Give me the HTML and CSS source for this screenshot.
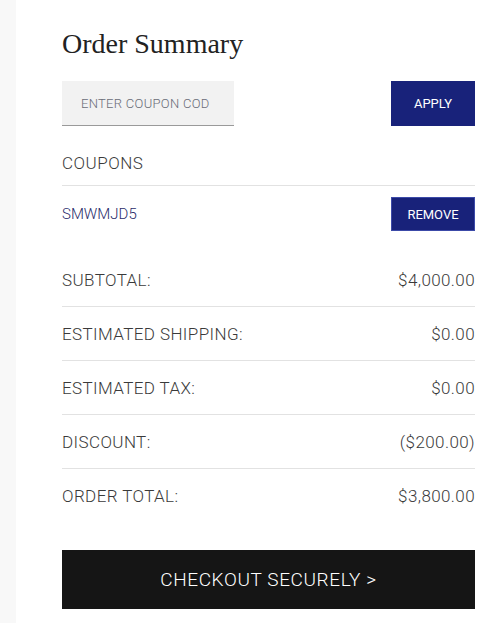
FILE: index.html
```html
<!DOCTYPE html>
<html>
<head>
<meta charset="utf-8">
<link rel="stylesheet" href="styles.css">
</head>
<body>
<div class="page">
  <div class="strip"></div>
  <main class="summary">
    <h1 class="title">Order Summary</h1>
    <div class="coupon-form">
      <div class="coupon-input">ENTER COUPON COD</div>
      <button class="btn btn-apply">APPLY</button>
    </div>
    <div class="coupons-label">COUPONS</div>
    <div class="coupon-row">
      <div class="coupon-line">
        <span class="coupon-code">SMWMJD5</span>
        <button class="btn btn-remove">REMOVE</button>
      </div>
    </div>
    <div class="totals">
      <div class="row"><span>SUBTOTAL:</span><span>$4,000.00</span></div>
      <div class="row"><span>ESTIMATED SHIPPING:</span><span>$0.00</span></div>
      <div class="row"><span>ESTIMATED TAX:</span><span>$0.00</span></div>
      <div class="row"><span>DISCOUNT:</span><span>($200.00)</span></div>
      <div class="row"><span>ORDER TOTAL:</span><span>$3,800.00</span></div>
    </div>
    <button class="btn btn-checkout">CHECKOUT SECURELY &gt;</button>
  </main>
</div>
</body>
</html>
```
FILE: styles.css
```css
html, body { margin: 0; padding: 0; background: #fff; }
body { font-family: Roboto, "Liberation Sans", sans-serif; color: #3a3a3a; }
.page { display: flex; min-height: 623px; }
.strip { width: 16px; background: #f8f8f8; flex: none; }
.summary { width: 413px; padding: 0 0 0 46px; }
.title {
  font-family: "Liberation Serif", serif; font-weight: 400;
  font-size: 28px; color: #222; margin: 28px 0 0 0; line-height: 32px;
}
.coupon-form { display: flex; justify-content: space-between; margin-top: 21px; }
.coupon-input {
  width: 172px; height: 45px; box-sizing: border-box;
  background: #f2f2f2; border-bottom: 1px solid #9a9a9a;
  font-size: 13px; font-weight: 300; color: #6a6d78; padding-left: 19px;
  letter-spacing: 0.3px;
  display: flex; align-items: center;
}
.btn { border: 0; font-family: Roboto, "Liberation Sans", sans-serif; color: #fff; cursor: pointer; padding: 0; }
.btn-apply { width: 84px; height: 45px; background: #18227a; font-size: 13px; }
.coupons-label {
  font-size: 17px; font-weight: 300; letter-spacing: 0.5px;
  height: 60px; padding-top: 27px; line-height: 20px; box-sizing: border-box;
  border-bottom: 1px solid #e2e2e2;
}
.coupon-row { height: 67px; padding-top: 11px; box-sizing: border-box; }
.coupon-line { display: flex; justify-content: space-between; align-items: center; height: 34px; }
.coupon-code { font-size: 15px; color: #2a2c6a; font-weight: 300; }
.btn-remove { width: 84px; height: 34px; background: #18227a; border: 1px solid #3c4aa8; box-sizing: border-box; font-size: 13px; }
.row {
  display: flex; justify-content: space-between; align-items: center;
  height: 54px; font-size: 17px; font-weight: 300; letter-spacing: 0.4px;
  border-bottom: 1px solid #e2e2e2; box-sizing: border-box;
}
.row:last-child { border-bottom: 0; }
.btn-checkout {
  width: 413px; height: 59px; background: #151515; font-size: 19px; font-weight: 300;
  letter-spacing: 0.6px; margin-top: 27px; display: block;
}
```
